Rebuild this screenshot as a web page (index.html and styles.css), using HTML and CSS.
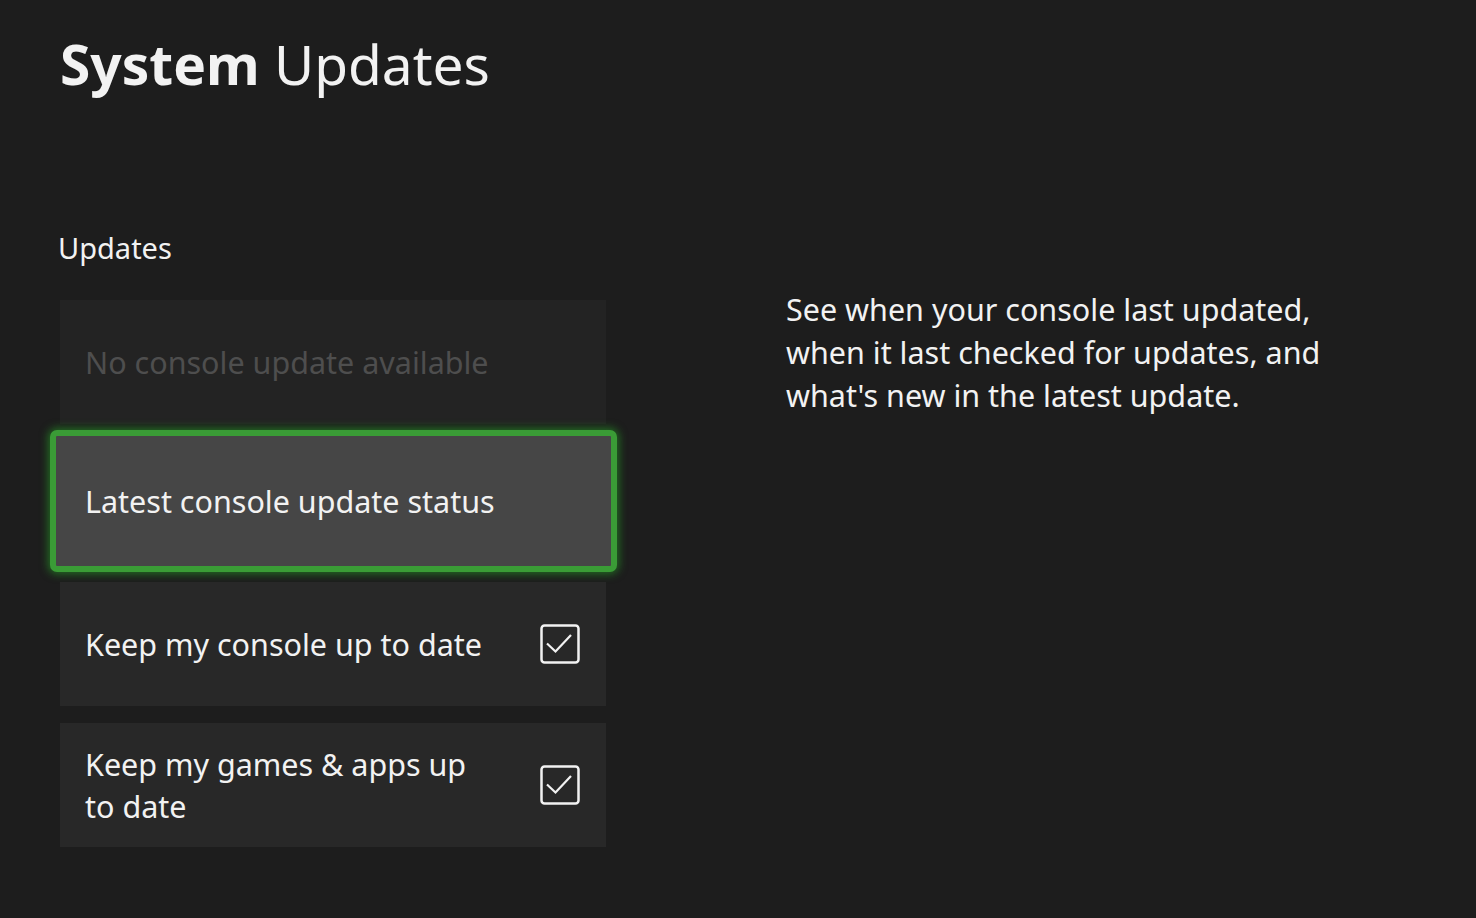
FILE: index.html
```html
<!DOCTYPE html>
<html lang="en">
<head>
  <meta charset="UTF-8" />
  <meta name="viewport" content="width=device-width, initial-scale=1.0"/>
  <title>System Updates</title>
  <link rel="stylesheet" href="styles.css">
</head>
<body>
  <div class="page">
    <h1 class="title"><strong>System</strong> Updates</h1>

    <div class="content">
      <div class="column">
        <h2 class="section">Updates</h2>
        <div class="list">
          <div class="item disabled">
            <span class="label">No console update available</span>
          </div>
          <div class="item focused">
            <span class="label">Latest console update status</span>
          </div>
          <div class="item">
            <span class="label">Keep my console up to date</span>
            <span class="check">
              <svg viewBox="0 0 40 40" width="40" height="40">
                <rect x="1.5" y="1.5" width="37" height="37" rx="3" fill="none" stroke="#f2f2f2" stroke-width="2.5"/>
                <path d="M7 19.5 L15.5 27.5 L31 11" fill="none" stroke="#f2f2f2" stroke-width="2.2"/>
              </svg>
            </span>
          </div>
          <div class="item">
            <span class="label">Keep my games &amp; apps up to date</span>
            <span class="check">
              <svg viewBox="0 0 40 40" width="40" height="40">
                <rect x="1.5" y="1.5" width="37" height="37" rx="3" fill="none" stroke="#f2f2f2" stroke-width="2.5"/>
                <path d="M7 19.5 L15.5 27.5 L31 11" fill="none" stroke="#f2f2f2" stroke-width="2.2"/>
              </svg>
            </span>
          </div>
        </div>
      </div>

      <p class="description">
        See when your console last updated,<br>
        when it last checked for updates, and<br>
        what's new in the latest update.
      </p>
    </div>
  </div>
</body>
</html>
```

FILE: styles.css
```css
* {
  box-sizing: border-box;
}

body {
  margin: 0;
  padding: 0;
  font-family: "Noto Sans", "Open Sans", sans-serif;
  background-color: #1d1d1d;
  color: #f2f2f2;
  height: 100vh;
  overflow: hidden;
}

.page {
  padding: 26px 0 0 60px;
}

.title {
  margin: 0;
  font-size: 55px;
  font-weight: 400;
  line-height: 76px;
}

.title strong {
  font-weight: 700;
}

.content {
  display: flex;
  gap: 180px;
}

.column {
  width: 546px;
}

.section {
  margin: 126px 0 0 -2px;
  font-size: 29px;
  font-weight: 400;
  line-height: 40px;
}

.list {
  display: flex;
  flex-direction: column;
  gap: 17px;
  margin-top: 32px;
}

.item {
  display: flex;
  align-items: center;
  justify-content: space-between;
  height: 124px;
  padding: 0 26px 0 25px;
  background: #282828;
  font-size: 30.5px;
  line-height: 42px;
}

.item .label {
  max-width: 405px;
}

.item.disabled {
  background: #232323;
  color: #4e4e4e;
}

.item.focused {
  height: 142px;
  margin: -11px -11px -7px -10px;
  padding-left: 29px;
  background: #464646;
  border: 6px solid #3a9c36;
  border-radius: 7px;
  box-shadow: 0 0 9px 2px rgba(40, 190, 40, 0.5);
}

.item.focused .label {
  max-width: none;
}

.check {
  display: flex;
  width: 40px;
  height: 40px;
}

.description {
  margin: 186px 0 0 0;
  font-size: 30.5px;
  line-height: 43px;
}
```
